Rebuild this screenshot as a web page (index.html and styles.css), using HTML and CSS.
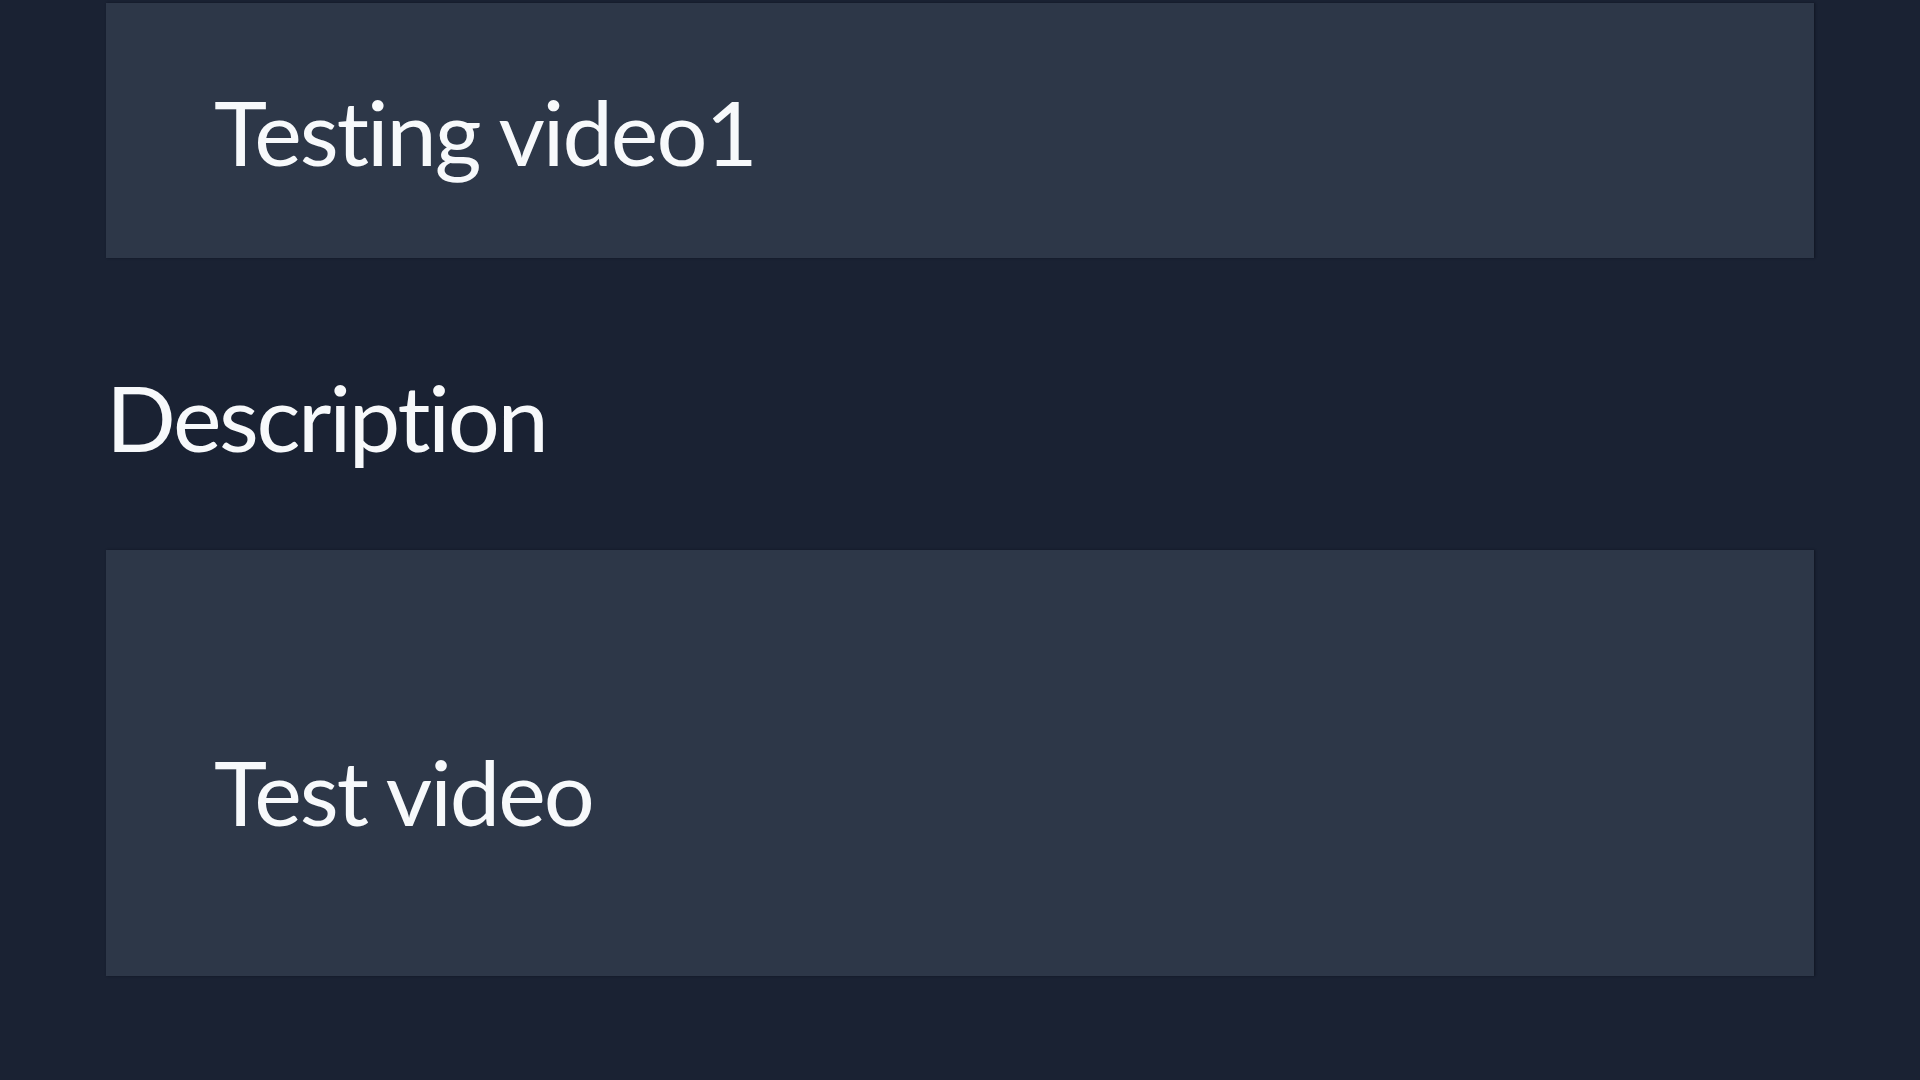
FILE: index.html
```html
<!DOCTYPE html>
<html lang="en">
<head>
  <meta charset="UTF-8">
  <meta name="viewport" content="width=device-width, initial-scale=1.0">
  <title>Edit video</title>
  <link rel="stylesheet" href="styles.css">
</head>
<body>
  <div class="form">
    <!-- Title field -->
    <div class="field title-field">Testing video1</div>

    <!-- Description field -->
    <label class="field-label">Description</label>
    <div class="field desc-field">Test video</div>
  </div>
</body>
</html>
```

FILE: styles.css
```css
/* General reset */
* {
  margin: 0;
  padding: 0;
  box-sizing: border-box;
}

body {
  font-family: "Lato", "Open Sans", Arial, sans-serif;
  font-variant-ligatures: none;
  background-color: #1a2233;
  color: #f7f9fb;
  min-height: 100vh;
}

.form {
  display: flex;
  flex-direction: column;
  padding: 3px 106px 0;
}

.field {
  background: #2d3748;
  box-shadow: 1px 0 2px rgba(10, 14, 24, 0.6);
  font-size: 90px;
  line-height: 1.2;
  letter-spacing: -2px;
  padding-left: 108px;
}

.title-field {
  height: 255px;
  display: flex;
  align-items: center;
}

.field-label {
  font-size: 92px;
  line-height: 1.2;
  letter-spacing: -2.4px;
  margin-top: 104px;
  margin-bottom: 78px;
}

.desc-field {
  height: 426px;
  padding-top: 187px;
}
```
